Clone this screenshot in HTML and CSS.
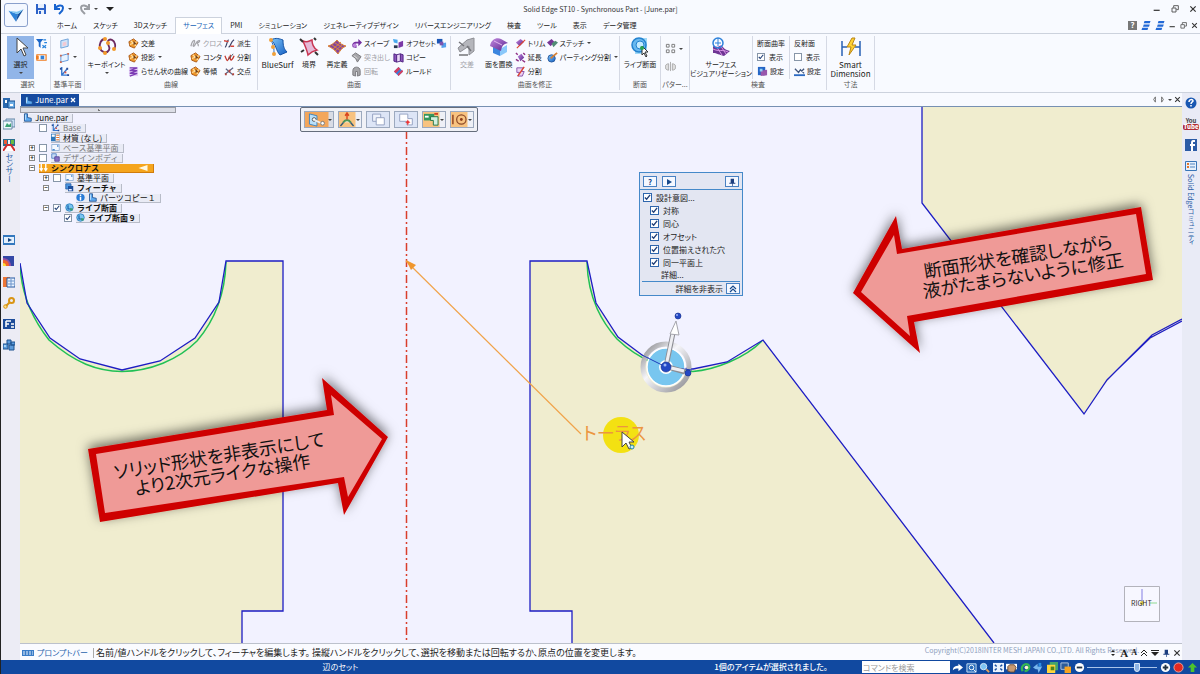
FILE: index.html
```html
<!DOCTYPE html>
<html lang="ja">
<head>
<meta charset="utf-8">
<meta name="viewport" content="width=device-width, initial-scale=1">
<title>Solid Edge ST10 - Synchronous Part - [June.par]</title>
<link rel="stylesheet" href="styles.css">
</head>
<body>
<svg class="defs" aria-hidden="true">
<defs>
<linearGradient id="gBlue" x2="1" y2="1"><stop offset="0" stop-color="#7cc4f8"/><stop offset="1" stop-color="#1660c4"/></linearGradient>
<linearGradient id="gPurple" x2="1" y2="1"><stop offset="0" stop-color="#c48ae0"/><stop offset="1" stop-color="#55208c"/></linearGradient>
<symbol id="i-save" viewBox="0 0 12 12"><path d="M1 1h9l1 1v9H1z" fill="#2d62c8"/><path d="M3 1h6v4H3zM3 7h6v4H3z" fill="#e8f0fc"/><path d="M4 8h2v3H4z" fill="#2d62c8"/></symbol>
<symbol id="i-undo" viewBox="0 0 12 12"><path d="M2 1v5h5M2 6c2-4 8-5 8-1 0 3-2 4-4 6" fill="none" stroke="#1763cf" stroke-width="2"/></symbol>
<symbol id="i-redo" viewBox="0 0 12 12"><path d="M10 1v5H5M10 6C8 2 2 1 2 5c0 3 2 4 4 6" fill="none" stroke="#9a9da3" stroke-width="2"/></symbol>
<symbol id="i-filter" viewBox="0 0 12 12"><path d="M0 1h8L5 5v6L3 9V5z" fill="#1a66c8"/><path d="M8 2h3M9 5h3M7 8l4 3M11 8l-4 3" stroke="#2583dd" stroke-width="1.3"/></symbol>
<symbol id="i-range" viewBox="0 0 12 12"><path d="M1 3h10v6H1z" fill="#fff" stroke="#ef7c20" stroke-width="1.3"/><path d="M0 4h3v4H0z" fill="#ef7c20"/><path d="M5 4h4v4H5z" fill="#3180d8"/></symbol>
<symbol id="i-plane" viewBox="0 0 12 12"><path d="M2 3l8-2v8l-8 2z" fill="#cfe4fa" stroke="#6a9fd8"/><path d="M4 5l4-1v4l-4 1z" fill="#f2c9d3"/></symbol>
<symbol id="i-plane2" viewBox="0 0 12 12"><path d="M2 4l8-2v7l-8 2z" fill="#e9f3ff" stroke="#5a93d8"/><path d="M1 3h2v2H1zM9 1h2v2H9zM1 10h2v2H1z" fill="#d06a50"/></symbol>
<symbol id="i-axes" viewBox="0 0 12 12"><path d="M3 1v9h7M3 10l6-7" fill="none" stroke="#3476d0" stroke-width="1.5"/><path d="M1 2h2v2H1zM8 2h2v2H8zM9 9h2v2H9z" fill="#284c98"/><path d="M6 6h2v2H6z" fill="#d54"/></symbol>
<symbol id="i-orange" viewBox="0 0 12 12"><path d="M1 4l5-3 5 4-4 6-5-2z" fill="#f19a2d" stroke="#a85410"/><path d="M2 7l8-3M3 3l6 6" stroke="#ffe0a0" stroke-width="1.2"/><path d="M6 3l3 3-3 2z" fill="#75431a"/></symbol>
<symbol id="i-helix" viewBox="0 0 12 12"><path d="M1 1h10v10H1z" fill="#e4d2f5"/><path d="M2 2h8L2 5h8L2 8h8l-8 3" fill="none" stroke="#7c3cb4" stroke-width="1.3"/></symbol>
<symbol id="i-cross-gray" viewBox="0 0 12 12"><path d="M1 9c1-5 3-7 4-6S2 9 4 9s2-5 5-6 1 2-1 2 2 1 1 4" fill="none" stroke="#a5a5aa" stroke-width="1.4"/></symbol>
<symbol id="i-derive" viewBox="0 0 12 12"><path d="M1 10c2 0 2-7 4-8M5 10c3-1 2-6 6-8" fill="none" stroke="#3c4266" stroke-width="1.3"/><path d="M0 3l5 1M7 9h4" stroke="#d2453b" stroke-width="1.5"/></symbol>
<symbol id="i-split" viewBox="0 0 12 12"><path d="M1 4c3 8 3 6 5 1M7 3c-1 9 2 6 4 1" fill="none" stroke="#c5392e" stroke-width="1.4"/><path d="M5 8l5-6" stroke="#456" /></symbol>
<symbol id="i-points" viewBox="0 0 12 12"><path d="M1 9l9-7M2 3l8 7" stroke="#5c6484" stroke-width="1.3"/><path d="M5 4h2v3H5zM1 8h2v2H1zM9 8h2v2H9z" fill="#b4453e"/></symbol>
<symbol id="i-sweep" viewBox="0 0 12 12"><path d="M2 10c-2-4 1-6 4-6h2V1l4 4-4 4V6H6C4 6 4 8 6 8v3z" fill="#74309f"/><circle cx="4" cy="8" r="2" fill="#bd83dd"/></symbol>
<symbol id="i-gray" viewBox="0 0 12 12"><path d="M1 4l4-3 6 4-4 6-2-4z" fill="#a6a6aa" stroke="#77777c"/><path d="M3 4l4 3" stroke="#ddd"/></symbol>
<symbol id="i-gray-turn" viewBox="0 0 12 12"><path d="M2 10V5c0-5 8-5 8 0v5l-3 1V6H5v5z" fill="#a6a6aa" stroke="#77777c"/></symbol>
<symbol id="i-offset" viewBox="0 0 12 12"><path d="M0 1l5 1v4L1 5z" fill="#49a9ee"/><path d="M6 5l5-2v6l-5 2z" fill="#7c3aa7"/><path d="M1 8h4v3H1z" fill="#29384f"/></symbol>
<symbol id="i-body" viewBox="0 0 12 12"><path d="M1 1h6v6H1z" fill="#c9def5" stroke="#3b71bd"/><path d="M5 5h6v6H5z" fill="#8770c4" stroke="#4b3c92"/></symbol>
<symbol id="i-copy" viewBox="0 0 12 12"><path d="M1 2l3 1v8l-3-1zM8 2l3 1v8l-3-1z" fill="#8d55bd" stroke="#4d2180"/><path d="M4 3l4-1v8l-4 1z" fill="#ead8f7" stroke="#4d2180"/></symbol>
<symbol id="i-ruled" viewBox="0 0 12 12"><path d="M1 6l5-5 5 5-5 5z" fill="#3a7fdc"/><path d="M1 6l5-5 2 2-5 5zM5 9l5-5 1 2-5 5z" fill="#d93e5d"/></symbol>
<symbol id="i-bluesq" viewBox="0 0 12 12"><path d="M1 1h6v5H1z" fill="#1b57b6"/><path d="M6 6l5-1v5l-5 1z" fill="#55a1ec"/><path d="M4 4h4v4H4z" fill="#7d54ae"/></symbol>
<symbol id="i-trim" viewBox="0 0 12 12"><path d="M1 5l5-4 4 3-5 5z" fill="url(#gPurple)"/><path d="M2 11L11 2" stroke="#e0442f" stroke-width="1.3"/></symbol>
<symbol id="i-extend" viewBox="0 0 12 12"><path d="M3 5l4-3 3 4-4 4z" fill="url(#gPurple)"/><path d="M1 1l2 2M8 9l3 2M1 8l3 2M9 1l2 2" stroke="#8f2f85" stroke-width="1.5"/></symbol>
<symbol id="i-cut" viewBox="0 0 12 12"><path d="M2 2h7L7 6h3l-2 5H3l2-4H2z" fill="#ecd2f2" stroke="#8650aa"/><path d="M3 11L10 1" stroke="#e0442f" stroke-width="1.5"/></symbol>
<symbol id="i-stitch" viewBox="0 0 12 12"><path d="M0 5l5-4 3 3-4 5z" fill="#753796"/><path d="M5 6l4-3 3 2-5 5z" fill="#508c75"/></symbol>
<symbol id="i-part" viewBox="0 0 12 12"><circle cx="5" cy="7" r="4" fill="url(#gBlue)" stroke="#28599d"/><path d="M4 7l7-6" stroke="#d78034" stroke-width="2"/></symbol>
<symbol id="i-pattern" viewBox="0 0 12 12"><g fill="none" stroke="#777"><path d="M1.500 1.500h3v3h-3zM7.500 1.500h3v3h-3zM1.500 7.500h3v3h-3zM7.500 7.500h3v3h-3z"/></g></symbol>
<symbol id="i-mirror" viewBox="0 0 12 12"><path d="M4 3c-5 0-5 7 0 7zM8 3c5 0 5 7 0 7z" fill="#ddd" stroke="#aaa"/><path d="M6 1v10" stroke="#aaa"/></symbol>
<symbol id="i-set1" viewBox="0 0 12 12"><path d="M1 1h8v9H1z" fill="#2566c6"/><path d="M4 5l7-1v6l-7 1z" fill="#9857ac"/><path d="M3 3h3v3H3z" fill="#8fd0f5"/></symbol>
<symbol id="i-set2" viewBox="0 0 12 12"><path d="M0 10h12" stroke="#2c6ac2" stroke-width="2"/><path d="M1 3l4 4 2-3 4 4M11 3L8 6" fill="none" stroke="#41567c" stroke-width="1.400"/></symbol>
<symbol id="i-part-file" viewBox="0 0 12 12"><path d="M2 1h4v5l5 1v4H2z" fill="#5da9ef" stroke="#154585"/><path d="M3 2h1v7H3z" fill="#d3ecff"/></symbol>
<symbol id="i-planes" viewBox="0 0 12 12"><path d="M1 2h10v8H1z" fill="#f4f9ff" stroke="#86a9d2"/><path d="M2 8h3v2H2zM8 3h2v2H8z" fill="#4a8bd0"/></symbol>
<symbol id="i-mat" viewBox="0 0 12 12"><path d="M0 1h6v10H0z" fill="#2b77bb"/><path d="M6 1h6v10H6z" fill="#fff" stroke="#68a"/><path d="M1 2h4v3H1z" fill="#fff"/><path d="M7 3h4M7 6h4M7 9h4" stroke="#e3722e" stroke-width="1.500"/></symbol>
<symbol id="i-feat" viewBox="0 0 12 12"><path d="M1 1h7v7H1z" fill="#4b94e0" stroke="#225aa0"/><path d="M4 4h7v7H4z" fill="#1d4f9c"/><path d="M5 8h4v2H5z" fill="#eef"/></symbol>
<symbol id="i-live" viewBox="0 0 12 12"><circle cx="6" cy="6" r="5" fill="#78c4f0" stroke="#1e74b8"/><path d="M4 3v5h4" stroke="#125aa8" stroke-width="1.500" fill="none"/><path d="M7 7h3v3H7z" fill="#3ba16a"/></symbol>
<symbol id="i-info" viewBox="0 0 12 12"><ellipse cx="6" cy="6" rx="5.500" ry="5" fill="#287bd7"/><path d="M5 2h2v2H5zM5 5h2v5H5z" fill="#fff"/></symbol>
<symbol id="i-panel" viewBox="0 0 12 12"><path d="M0 1h12v10H0z" fill="#3378bd"/><path d="M1 3h10v6H1z" fill="#e3f0fc"/><path d="M5 4l4 2-4 2z" fill="#16457e"/></symbol>
<symbol id="i-lib" viewBox="0 0 12 12"><path d="M0 1h7v10H0z" fill="#2b69ae"/><path d="M5 4h7v7H5z" fill="#6faee5" stroke="#174f91"/><path d="M2 3h2v3H2zM7 7h3v2H7z" fill="#fff"/></symbol>
<symbol id="i-pics" viewBox="0 0 12 12"><path d="M3 1h9v8H3z" fill="#c9dff3" stroke="#6787a6"/><path d="M0 3h9v8H0z" fill="#eff8fb" stroke="#6787a6"/><path d="M2 9l2-4 2 2 2-2v4z" fill="#3da274"/></symbol>
<symbol id="i-sensor" viewBox="0 0 12 12"><path d="M0 0h12v7H0z" fill="#2a6f8f"/><path d="M1 1h3v4H1z" fill="#ed5c38"/><path d="M5 1h2v4H5z" fill="#f4f4f4"/><path d="M8 1h3v4H8z" fill="#66bc43"/><path d="M0 12l4-6h4l4 6" fill="#fff" stroke="#d22d2d" stroke-width="2"/></symbol>
<symbol id="i-heat" viewBox="0 0 12 12"><path d="M0 1h11v10H0z" fill="#3347a5"/><path d="M0 3c5 0 8 4 8 8H0z" fill="#9750a3"/><path d="M0 5c4 0 6 2 6 6H0z" fill="#f0642e"/><path d="M0 8c2 0 3 1 3 3H0z" fill="#ffdb35"/></symbol>
<symbol id="i-table" viewBox="0 0 12 12"><path d="M0 1h7v10H0z" fill="#ed7636"/><path d="M4 2h8v9H4z" fill="#e9f3ff" stroke="#2458a0"/><path d="M5 5h6M5 8h6M8 3v8" stroke="#6d95cb"/></symbol>
<symbol id="i-key" viewBox="0 0 12 12"><circle cx="8.500" cy="3.500" r="2.500" fill="none" stroke="#d99514" stroke-width="2"/><circle cx="2.500" cy="9.500" r="1.800" fill="#ffe18b" stroke="#d99514"/><path d="M7 5L3 9" stroke="#d99514" stroke-width="2"/></symbol>
<symbol id="i-f" viewBox="0 0 12 12"><path d="M0 1h12v10H0z" fill="#1d4c9a"/><path d="M3 3h5M3 3v6M3 6h3M8 6h3M8 9h3" stroke="#fff" stroke-width="1.500"/></symbol>
<symbol id="i-cubes" viewBox="0 0 12 12"><path d="M4 1h4v4H4zM0 5h5v5H0zM6 6h5v5H6zM8 3h4v3H8z" fill="#5c9bdc" stroke="#1e528f"/><path d="M1 6h2v2H1z" fill="#a1d1f5"/></symbol>
<symbol id="i-dots" viewBox="0 0 12 12"><path d="M0 1h12v10H0z" fill="#eaf2fd"/><path d="M2 3l2 2M10 3L8 5M2 9l2-2M10 9L8 7" stroke="#174e9f" stroke-width="1.600"/></symbol>
<symbol id="i-win" viewBox="0 0 12 12"><path d="M1 2h10v9H1z" fill="#286ab9" stroke="#cfe6fa"/><circle cx="6" cy="6" r="2.500" fill="none" stroke="#fff"/><path d="M8 8l3 3" stroke="#fff"/></symbol>
<symbol id="i-zoom" viewBox="0 0 12 12"><circle cx="5" cy="5" r="3.500" fill="#7fc4f3" stroke="#dcecf9"/><path d="M8 8l3 3" stroke="#e6a45a" stroke-width="2"/></symbol>
<symbol id="i-hand" viewBox="0 0 12 12"><path d="M0 2h12v6H0z" fill="#fff"/><path d="M2 10V5l2-2h5l2 3-2 5H5z" fill="#c79a72" stroke="#684a34"/></symbol>
<symbol id="i-spin" viewBox="0 0 12 12"><path d="M3 10C0 5 5 1 9 3c3 3-1 7-4 7" fill="none" stroke="#35b651" stroke-width="2.500"/><circle cx="7" cy="6" r="2" fill="#fff6d0"/></symbol>
<symbol id="i-compass" viewBox="0 0 12 12"><path d="M0 6l5-4v3h5L6 12 5 8H3z" fill="#78b7ef"/><path d="M6 1h3v4H6z" fill="#2c8de5"/></symbol>
<symbol id="i-style" viewBox="0 0 12 12"><path d="M3 0h9v9H3z" fill="#42a46b"/><path d="M0 3h9v9H0z" fill="#ffd43b"/><path d="M4 5h4v4H4z" fill="#4c831d"/></symbol>
<symbol id="i-layer" viewBox="0 0 12 12"><path d="M1 1h8v7H1z" fill="#2d5c9a" stroke="#b7c9df"/><path d="M5 5h7v7H5z" fill="#f6a321"/></symbol>
<symbol id="i-win3" viewBox="0 0 12 12"><path d="M4 0h8l-1 3H3zM3 4.500h8l-1 3H2zM1 9h8l-1 3H0z" fill="#2269d6"/></symbol>
<symbol id="i-restore" viewBox="0 0 12 12"><path d="M4 4V1h7v6H8M1.500 4.500h6v6h-6z" fill="none" stroke="#555" stroke-width="1.400"/></symbol>
<symbol id="i-close" viewBox="0 0 12 12"><path d="M2 2l8 8M10 2l-8 8" stroke="#333" stroke-width="1.800"/></symbol>
<symbol id="i-min" viewBox="0 0 12 12"><path d="M1 8h9" stroke="#444" stroke-width="2"/></symbol>
<symbol id="i-pin" viewBox="0 0 12 12"><path d="M4 1h5v6h2v1.500H2V7h2zM6 8h1v4H6z" fill="#1d3f80"/></symbol>
</defs>
</svg>

<div class="app">
<header class="header">
  <button class="app-button" aria-label="アプリケーション"><svg viewBox="0 0 24 24"><path d="M3 7l11 4-2 9z" fill="#2d83d8"/><path d="M14 11l7-6-9 15z" fill="#15539f"/><path d="M3 7l11 4 7-6-8 3z" fill="#7ec6f2"/></svg></button>
  <div class="quick">
    <button aria-label="保存"><svg class="ic"><use href="#i-save"/></svg></button>
    <button aria-label="元に戻す" class="with-caret"><svg class="ic"><use href="#i-undo"/></svg><i class="caret"></i></button>
    <button aria-label="やり直し" class="with-caret"><svg class="ic"><use href="#i-redo"/></svg><i class="caret"></i></button>
    <button aria-label="カスタマイズ"><i class="caret big-caret"></i></button>
  </div>
  <h1 class="title">Solid Edge ST10 - Synchronous Part - [June.par]</h1>
  <div class="window-controls">
    <button aria-label="最小化"><svg><use href="#i-min"/></svg></button><button aria-label="元のサイズ"><svg><use href="#i-restore"/></svg></button><button aria-label="閉じる"><svg><use href="#i-close"/></svg></button>
  </div>
  <nav class="tabs">
    <a href="#home">ホーム</a><a href="#sketch">スケッチ</a><a href="#sketch3d">3Dスケッチ</a><a href="#surface" class="active">サーフェス</a><a href="#pmi">PMI</a><a href="#sim">シミュレーション</a><a href="#gen">ジェネレーティブデザイン</a><a href="#rev">リバースエンジニアリング</a><a href="#insp">検査</a><a href="#tools">ツール</a><a href="#view">表示</a><a href="#data">データ管理</a>
  </nav>
  <div class="doc-controls">
    <button class="help-box" aria-label="ヘルプ">?</button><button aria-label="ウィンドウ"><svg class="ic"><use href="#i-win3"/></svg></button><button aria-label="重ねて表示"><svg class="ic"><use href="#i-win3"/></svg></button><button aria-label="文書を最小化"><svg><use href="#i-min"/></svg></button><button aria-label="文書を元のサイズに"><svg><use href="#i-restore"/></svg></button><button aria-label="文書を閉じる"><svg><use href="#i-close"/></svg></button>
  </div>
</header>

<div class="ribbon">
  <section class="group g-select"><div class="group-body">
    <button class="big selected"><svg viewBox="0 0 20 20"><path d="M6 1v15l4-4 3 7 2-1-3-7h5z" fill="#fff" stroke="#444"/></svg><span>選択</span><i class="caret"></i></button>
    <div class="stack"><button class="tool" aria-label="フィルター"><svg class="ic"><use href="#i-filter"/></svg></button><button class="tool" aria-label="範囲"><svg class="ic"><use href="#i-range"/></svg></button></div>
  </div><h2>選択</h2></section>
  <section class="group g-plane"><div class="group-body">
    <div class="stack"><button class="tool" aria-label="平面"><svg class="ic"><use href="#i-plane"/></svg></button><button class="tool" aria-label="平行平面"><svg class="ic"><use href="#i-plane2"/></svg><i class="caret"></i></button><button class="tool" aria-label="座標系"><svg class="ic"><use href="#i-axes"/></svg></button></div>
  </div><h2>基準平面</h2></section>
  <section class="group g-curve"><div class="group-body">
    <button class="big"><svg viewBox="0 0 20 20"><path d="M8 2C4 2 2 7 3 11s7 6 9 2-3-6-1-9 6-1 7 3-1 5-2 5" fill="none" stroke="#6c2a60" stroke-width="1.800"/><g fill="#f39a2c"><circle cx="8" cy="2" r="2"/><circle cx="3" cy="11" r="2"/><circle cx="8" cy="16" r="2"/><circle cx="11" cy="6" r="2"/><circle cx="17" cy="12" r="2"/></g></svg><span>キーポイント</span><i class="caret"></i></button>
    <div class="stack"><button class="tool"><svg class="ic"><use href="#i-orange"/></svg>交差</button><button class="tool"><svg class="ic"><use href="#i-orange"/></svg>投影<i class="caret"></i></button><button class="tool"><svg class="ic"><use href="#i-helix"/></svg>らせん状の曲線</button></div>
    <div class="stack"><button class="tool" disabled><svg class="ic"><use href="#i-cross-gray"/></svg>クロス</button><button class="tool"><svg class="ic"><use href="#i-orange"/></svg>コンタ</button><button class="tool"><svg class="ic"><use href="#i-orange"/></svg>等傾</button></div>
    <div class="stack"><button class="tool"><svg class="ic"><use href="#i-derive"/></svg>派生</button><button class="tool"><svg class="ic"><use href="#i-split"/></svg>分割</button><button class="tool"><svg class="ic"><use href="#i-points"/></svg>交点</button></div>
  </div><h2>曲線</h2></section>
  <section class="group g-surface"><div class="group-body">
    <button class="big"><svg viewBox="0 0 20 20"><path d="M3 3c5-3 9-1 12 0 0 6 1 9 4 12l-7 3C8 14 8 7 3 3z" fill="url(#gBlue)" stroke="#1553a5"/><path d="M3 4c3 4 3 8 3 13" stroke="#286cc0" fill="none"/><g fill="#f0a13c"><circle cx="3" cy="3" r="2"/><circle cx="5" cy="10" r="2"/><circle cx="6" cy="17" r="2"/></g></svg><span class="latin">BlueSurf</span></button>
    <button class="big"><svg viewBox="0 0 20 20"><path d="M4 4c4 2 6 0 9-1 0 5 2 8 5 10-4 1-7 3-9 5-1-5-3-9-5-14z" fill="#e5b9d7" stroke="#c83552" stroke-width="1.500"/><path d="M1 2l3 3M15 1l2 2M16 15l3 3M2 15l3-2" stroke="#333" stroke-width="2"/></svg><span>境界</span></button>
    <button class="big"><svg viewBox="0 0 20 20"><path d="M1 9c4-1 6-3 9-6 2 3 5 5 9 6-4 2-6 4-8 8-3-4-6-6-10-8z" fill="#87459b" stroke="#dc8337"/><path d="M5 8l9 6M8 6l8 5M6 12l8-7M8 14l8-7" fill="none" stroke="#d9863f"/></svg><span>再定義</span></button>
    <div class="stack"><button class="tool"><svg class="ic"><use href="#i-sweep"/></svg>スイープ</button><button class="tool" disabled><svg class="ic"><use href="#i-gray"/></svg>突き出し</button><button class="tool" disabled><svg class="ic"><use href="#i-gray-turn"/></svg>回転</button></div>
    <div class="stack"><button class="tool"><svg class="ic"><use href="#i-offset"/></svg>オフセット</button><button class="tool"><svg class="ic"><use href="#i-copy"/></svg>コピー</button><button class="tool"><svg class="ic"><use href="#i-ruled"/></svg>ルールド</button></div>
    <div class="stack"><button class="tool" aria-label="中間曲面"><svg class="ic"><use href="#i-bluesq"/></svg></button></div>
  </div><h2>曲面</h2></section>
  <section class="group g-modify"><div class="group-body">
    <button class="big" disabled><svg viewBox="0 0 20 20"><path d="M10 3l7-2v13l-5 4V9l-9 6-2-4z" fill="#b5b6bc" stroke="#8d8e94"/><path d="M2 5l5 4M10 9l4 5M2 18h9" stroke="#74757a" stroke-width="1.500"/></svg><span>交差</span></button>
    <button class="big"><svg viewBox="0 0 20 20"><path d="M4 9l7 3v7l-7-3z" fill="#3c86df"/><path d="M11 12l7-4v7l-7 4z" fill="#8ac8fa"/><path d="M1 9c1-7 7-9 11-7l7 4c-5 1-6 3-7 8z" fill="url(#gPurple)"/><path d="M5 4l8 4" stroke="#e0b5ef"/></svg><span>面を置換</span></button>
    <div class="stack"><button class="tool"><svg class="ic"><use href="#i-trim"/></svg>トリム</button><button class="tool"><svg class="ic"><use href="#i-extend"/></svg>延長</button><button class="tool"><svg class="ic"><use href="#i-cut"/></svg>分割</button></div>
    <div class="stack"><button class="tool"><svg class="ic"><use href="#i-stitch"/></svg>ステッチ<i class="caret"></i></button><button class="tool"><svg class="ic"><use href="#i-part"/></svg>パーティング分割<i class="caret"></i></button></div>
  </div><h2>曲面を修正</h2></section>
  <section class="group g-section"><div class="group-body">
    <button class="big"><svg viewBox="0 0 20 20"><path d="M5 1h12v14l-3 2H5z" fill="#a0d8f6"/><circle cx="9" cy="8" r="7" fill="#68b8ef" stroke="#2382cf" stroke-width="1.500"/><circle cx="10" cy="8" r="4" fill="#c2eaff" stroke="#2382cf"/><path d="M12 9v9l2-2 2 4 1-1-2-4h3z" fill="#fff" stroke="#333"/><circle cx="12" cy="11" r="2" fill="#29a353"/></svg><span>ライブ断面</span></button>
  </div><h2>断面</h2></section>
  <section class="group g-pattern"><div class="group-body">
    <div class="stack two"><button class="tool" aria-label="パターン"><svg class="ic"><use href="#i-pattern"/></svg><i class="caret"></i></button><button class="tool" disabled aria-label="ミラー"><svg class="ic"><use href="#i-mirror"/></svg></button></div>
  </div><h2>パター...</h2></section>
  <section class="group g-inspect"><div class="group-body">
    <button class="big"><svg viewBox="0 0 20 20"><path d="M2 9c6 3 7-2 9 0s3 4 8 5l-6 5c-5-1-7-3-11-3z" fill="#6e3594"/><path d="M5 9l6 9M9 8l6 9M2 12c6 3 9 0 15 3" stroke="#d894e6" fill="none"/><ellipse cx="7" cy="6" rx="5" ry="5" fill="none" stroke="#2d82db" stroke-width="1.500"/><path d="M7 1v8M4 6h6" stroke="#2d82db"/></svg><span>サーフェス<br>ビジュアリゼーション</span></button>
    <div class="stack ruled"><span class="head">断面曲率</span><label class="tool"><input type="checkbox" checked>表示</label><button class="tool"><svg class="ic"><use href="#i-set1"/></svg>設定</button></div>
    <div class="stack ruled"><span class="head">反射面</span><label class="tool"><input type="checkbox">表示</label><button class="tool"><svg class="ic"><use href="#i-set2"/></svg>設定</button></div>
  </div><h2>検査</h2></section>
  <section class="group g-dim"><div class="group-body">
    <button class="big"><svg viewBox="0 0 20 20"><path d="M1 4v15M19 4v15M1 10h5M14 10h5" stroke="#2862b5" stroke-width="1.500"/><path d="M11 1L6 10h4l-2 8 7-10h-4l3-7z" fill="#ffd233" stroke="#b98516"/></svg><span class="latin">Smart<br>Dimension</span></button>
  </div><h2>寸法</h2></section>
</div>

<div class="workspace">
  <aside class="rail left">
    <button aria-label="ライブラリ"><svg><use href="#i-lib"/></svg></button><button aria-label="ファミリ"><svg><use href="#i-pics"/></svg></button><button aria-label="センサー"><svg><use href="#i-sensor"/></svg></button>
    <span class="vertical">センサー</span>
    <button aria-label="再生"><svg><use href="#i-panel"/></svg></button><button aria-label="シミュレーション"><svg><use href="#i-heat"/></svg></button><button aria-label="テーブル"><svg><use href="#i-table"/></svg></button><button aria-label="キー"><svg><use href="#i-key"/></svg></button><button aria-label="フィーチャライブラリ"><svg><use href="#i-f"/></svg></button><button aria-label="部品"><svg><use href="#i-cubes"/></svg></button>
  </aside>
  <main class="center">
    <div class="doc-tabs"><a href="#june" class="doc-tab"><svg class="ic"><use href="#i-part-file"/></svg>June.par<svg class="x" viewBox="0 0 6 6"><path d="M1 1l4 4M5 1L1 5" stroke="#fff" stroke-width="1.300"/></svg></a>
      <div class="doc-nav"><button aria-label="前へ"><svg viewBox="0 0 8 8"><path d="M5 1L3 4l2 3z" fill="none" stroke="#666"/></svg></button><button aria-label="次へ"><svg viewBox="0 0 8 8"><path d="M3 1l2 3-2 3z" fill="none" stroke="#666"/></svg></button><button aria-label="一覧"><i class="caret"></i></button><button aria-label="タブを閉じる"><svg viewBox="0 0 12 12"><use href="#i-close"/></svg></button></div></div>
    <div class="canvas">
      <svg class="drawing" viewBox="20 107 1162 536" preserveAspectRatio="xMinYMin slice">
        <defs>
          <filter id="shadow" x="-20%" y="-25%" width="140%" height="150%"><feDropShadow dx="0" dy="-3" stdDeviation="6" flood-color="#000" flood-opacity=".55"/></filter>
          <linearGradient id="ring" x2="1" y2="1"><stop offset="0" stop-color="#858589"/><stop offset=".4" stop-color="#f6f6fa"/><stop offset="1" stop-color="#8b8b90"/></linearGradient>
        </defs>
        <g fill="#f0edcf">
          <path d="M20 263l7 40 23 35 30 21 42 11 38-9 35-23 24-36 7-41h57v350h-41v32H20z"/>
          <path d="M530 261h57l9 42 22 34 24 18 25 12 26 2 34-7 36-22 231 303H572v-32h-42z"/>
          <path d="M922 107v96l162 211c24-38 56-74 98-93V107z"/>
        </g>
        <g fill="none" stroke="#20c055" stroke-width="1.500">
          <path d="M20 264C21 290 30 316 49 340C75 363 97 371 122 371.500C150 371 178 360 197 341C215 320 225 295 226 262"/>
          <path d="M587 262C588 300 603 323 617 339C638 359 665 371 693 371.500C715 370 745 358 762 341"/>
        </g>
        <g fill="none" stroke="#1d1dc4" stroke-width="1.300">
          <path d="M20 263l7 40 23 35 30 21 42 11 38-9 35-23 24-36 7-41h57v350h-41v32"/>
          <path d="M572 643v-32h-42V261h57l9 42 22 34 24 18 25 12 26 2 34-7 36-22 231 303"/>
          <path d="M922 107v96l162 211 23-34 10-10 33-32 32-17M1117 370l35-35 30-16"/>
        </g>
        <path d="M406.500 131v512" stroke="#d93f2c" stroke-width="1.500" stroke-dasharray="8 3 2 3"/>
        <path d="M406 261l175 173" stroke="#f0a34a" stroke-width="1.200"/><path d="M406 260l10 5-5 5z" fill="#f0972e"/>
        <circle cx="621" cy="435" r="18" fill="#f3e112"/>
        <text x="583" y="440" class="torus">トーラス</text>
        <path d="M622 432v15l4-4 3 6 3-1-3-6h5z" fill="#fff" stroke="#444"/><circle cx="632" cy="447" r="2" fill="#c7eef9" stroke="#2486a3"/>
        <circle cx="666" cy="367" r="19" fill="#78c6ef"/>
        <circle cx="666" cy="367" r="23" fill="none" stroke="url(#ring)" stroke-width="5"/>
        <circle cx="666" cy="367" r="19" fill="none" stroke="#fff" stroke-width="1.500"/>
        <circle cx="666" cy="367" r="7" fill="#fff"/>
        <path d="M642 355l24 12 26 3" fill="none" stroke="#1d3dbb"/>
        <path d="M666 367l7-34M668 367l17 5" stroke="#8c8d94" stroke-width="5"/><path d="M666 366l7-33M667 367l17 4" stroke="#eeeef2" stroke-width="3"/>
        <path d="M670 334l6-13 3 14z" fill="#fff" stroke="#a5a5ad"/>
        <g fill="#2448c4" stroke="#142b88" stroke-width=".6"><circle cx="678" cy="316" r="3"/><circle cx="666" cy="367" r="5"/><circle cx="688" cy="373" r="3"/></g><circle cx="665" cy="365" r="1.500" fill="#9db4f5"/><circle cx="677" cy="315" r="1" fill="#9db4f5"/>
        <g class="callout"><g filter="url(#shadow)"><path d="M88 449l239-39-5-32 66 59-44 78-6-32-238 39z" fill="#ce0000"/></g><path d="M96 454l238-39-3-20 51 44-34 58-4-20-239 36z" fill="#ef9a97"/>
          <text transform="translate(115 479) rotate(-9)">ソリッド形状を非表示にして</text><text transform="translate(136 495) rotate(-9)">より2次元ライクな操作</text></g>
        <g class="callout"><g filter="url(#shadow)"><path d="M853 293l43-77 6 33 239-42 12 73-239 42 6 31z" fill="#ce0000"/></g><path d="M861 292l33-57 3 19 239-40 10 60-239 42 3 20z" fill="#ef9a97"/>
          <text transform="translate(925 278) rotate(-9)">断面形状を確認しながら</text><text transform="translate(924 298) rotate(-9)">液がたまらないように修正</text></g>
        <path d="M1124.500 586.500h35v35h-35z" fill="#f7f7ff" stroke="#b3b3bb"/><path d="M1142 589v14" stroke="#aaa6ed" stroke-width="1.500"/><path d="M1150 603h7" stroke="#8fdb91"/><circle cx="1142" cy="603" r="2" fill="#d8cc4a"/><text x="1131" y="606" class="view-name">RIGHT</text>
      </svg>

      <div class="tree">
        <div class="splitter"></div>
        <ul>
          <li class="l0"><span class="tag"><svg><use href="#i-part-file"/></svg>June.par</span></li>
          <li class="l1"><input type="checkbox" aria-label="Base"><span class="tag dim"><svg><use href="#i-axes"/></svg>Base</span></li>
          <li class="l1"><b class="blank"></b><span class="tag"><svg><use href="#i-mat"/></svg>材質 (なし)</span></li>
          <li class="l1e"><button class="exp" aria-label="展開">+</button><input type="checkbox" aria-label="ベース基準平面"><span class="tag dim"><svg><use href="#i-planes"/></svg>ベース基準平面</span></li>
          <li class="l1e"><button class="exp" aria-label="展開">+</button><input type="checkbox" aria-label="デザインボディ"><span class="tag dim"><svg><use href="#i-body"/></svg>デザインボディ</span></li>
          <li class="l1e"><button class="exp" aria-label="折りたたむ">−</button><span class="tag sync"><svg viewBox="0 0 12 12"><path d="M3 1v8M9 1v8M1 7l2 3 2-3M7 7l2 3 2-3" stroke="#fff" stroke-width="1.800" fill="none"/></svg>シンクロナス<svg class="marker" viewBox="0 0 12 8"><path d="M0 4l12-4v8z" fill="#fff8e0"/></svg></span></li>
          <li class="l2"><button class="exp" aria-label="展開">+</button><input type="checkbox" aria-label="基準平面"><span class="tag"><svg><use href="#i-planes"/></svg>基準平面</span></li>
          <li class="l2"><button class="exp" aria-label="折りたたむ">−</button><b class="blank"></b><span class="tag bold"><svg><use href="#i-feat"/></svg>フィーチャ</span></li>
          <li class="l3"><span class="tag"><svg><use href="#i-info"/></svg><svg><use href="#i-part-file"/></svg>パーツコピー１</span></li>
          <li class="l2"><button class="exp" aria-label="折りたたむ">−</button><input type="checkbox" checked aria-label="ライブ断面"><span class="tag bold"><svg><use href="#i-live"/></svg>ライブ断面</span></li>
          <li class="l4"><input type="checkbox" checked aria-label="ライブ断面 9"><span class="tag bold"><svg><use href="#i-live"/></svg>ライブ断面 9</span></li>
        </ul>
      </div>

      <div class="command-bar">
        <button class="on wide" aria-label="フィーチャ"><svg viewBox="0 0 20 16"><path d="M3 2l8 2v11l-8-2z" fill="#b9e0fa" stroke="#3e83bd"/><circle cx="8" cy="8" r="2" fill="#fff" stroke="#555"/><path d="M9 9l7 3" stroke="#eee" stroke-width="2"/><circle cx="17" cy="12" r="2" fill="#fff" stroke="#777"/></svg><i class="caret"></i></button>
        <button class="on" aria-label="拘束"><svg viewBox="2 0 16 16"><path d="M3 15l5-6h4l5 6" fill="none" stroke="#335b77" stroke-width="1.500"/><path d="M6 11c2-3 6-3 8 0" fill="#fff" stroke="#4f9753" stroke-width="2"/><path d="M10 8V2M8 4l2-3 2 3" fill="none" stroke="#d9461e" stroke-width="1.500"/></svg><i class="caret"></i></button>
        <button aria-label="コピー"><svg viewBox="0 0 20 16"><path d="M4 2h9v8H4z" fill="#eef2fb" stroke="#8e9dbe"/><path d="M8 6h9v8H8z" fill="#fff" stroke="#8e9dbe"/></svg></button>
        <button aria-label="切り離し"><svg viewBox="0 0 20 16"><path d="M3 2h9v5h5v7h-6v-4H3z" fill="#fff" stroke="#8e9dbe"/><path d="M12 8l1 2 2 1-2 1-1 3-1-3-2-1 2-1z" fill="#ee3636"/></svg></button>
        <button class="on" aria-label="移動"><svg viewBox="1 0 17 16"><path d="M2 2h11v7H2z" fill="#35975e"/><path d="M9 5h8v9h-5V9H9z" fill="#d3f0df" stroke="#237443"/><path d="M3 4h4v2H3z" fill="#fff"/><path d="M13 2h4" stroke="#cf4022" stroke-width="2"/></svg><i class="caret"></i></button>
        <button class="on" aria-label="軸"><svg viewBox="1 0 17 16"><path d="M3 3v10" stroke="#8d3d1b" stroke-width="1.500"/><circle cx="12" cy="8" r="5" fill="none" stroke="#8d4a28" stroke-width="1.300"/><circle cx="12" cy="8" r="1.500" fill="#8d3d1b"/></svg><i class="caret"></i></button>
      </div>

      <form class="intent">
        <div class="intent-head"><button type="button" aria-label="ヘルプ">?</button><button type="button" aria-label="再生"><svg viewBox="0 0 8 8"><path d="M2 1l5 3-5 3z" fill="#174a8c"/></svg></button><button type="button" aria-label="ピン" class="end"><svg viewBox="0 0 12 12"><use href="#i-pin"/></svg></button></div>
        <label><input type="checkbox" checked>設計意図...</label>
        <label class="sub"><input type="checkbox" checked>対称</label>
        <label class="sub"><input type="checkbox" checked>同心</label>
        <label class="sub"><input type="checkbox" checked>オフセット</label>
        <label class="sub"><input type="checkbox" checked>位置揃えされた穴</label>
        <label class="sub"><input type="checkbox" checked>同一平面上</label>
        <a href="#detail" class="more">詳細...</a>
        <div class="intent-foot"><span>詳細を非表示</span><button type="button" aria-label="詳細を非表示"><svg viewBox="0 0 8 8"><path d="M1 4l3-3 3 3M1 7l3-3 3 3" fill="none" stroke="#174a8c" stroke-width="1.200"/></svg></button></div>
      </form>
    </div>
    <div class="prompt">
      <span class="prompt-name"><svg viewBox="0 0 12 8"><path d="M0 1h12v6H0z" fill="#3a7cc7"/><path d="M1 3h10M1 5h10" stroke="#e8f2fd" stroke-dasharray="2 1"/></svg>プロンプトバー</span>
      <output class="prompt-text">名前/値ハンドルをクリックして、フィーチャを編集します。 操縦ハンドルをクリックして、選択を移動または回転するか、原点の位置を変更します。</output>
      <span class="copyright">Copyright(C)2018INTER MESH JAPAN CO.,LTD. All Rights Reserved.</span>
      <div class="prompt-tools"><button aria-label="行数"><svg viewBox="0 0 8 8"><path d="M2 3l2-2 2 2zM2 5l2 2 2-2z" fill="#222"/></svg></button><button class="font-up" aria-label="文字を拡大">A</button><button class="font-down" aria-label="文字を縮小">A</button><button aria-label="上へ"><svg viewBox="0 0 8 8"><path d="M1 4l3-3 3 3M1 7l3-3 3 3" fill="none" stroke="#222"/></svg></button><button aria-label="下へ"><svg viewBox="0 0 8 8"><path d="M0 1h8v1H0zM0 3h8L4 7z" fill="#222"/></svg></button><button aria-label="固定"><svg viewBox="0 0 12 12"><use href="#i-pin"/></svg></button><button aria-label="閉じる"><svg viewBox="0 0 12 12"><use href="#i-close"/></svg></button></div>
    </div>
  </main>
  <aside class="rail right">
    <button aria-label="ヘルプ"><svg viewBox="0 0 12 12"><circle cx="6" cy="6" r="5.500" fill="#1857b2"/><path d="M4 5c0-3 4-3 4-1 0 1-2 1-2 3M6 8v1.500" stroke="#fff" stroke-width="1.500" fill="none"/></svg></button>
    <button class="yt" aria-label="YouTube"><span>You</span><b>Tube</b></button>
    <button aria-label="Facebook"><svg viewBox="0 0 12 12"><path d="M0 0h12v12H0z" fill="#2b5ba5"/><path d="M10 2H8Q7 2 7 4v8M5 6h5" stroke="#fff" stroke-width="2" fill="none"/></svg></button>
    <button aria-label="コミュニティ"><svg viewBox="0 0 12 12"><path d="M.5 1.500h11v9H.5z" fill="#e6f0fb" stroke="#3976b8"/><path d="M2 4h2M2 7h2" stroke="#e2762b" stroke-width="2"/><path d="M5 4h5M5 7h5" stroke="#4e83c1"/></svg></button>
    <span class="vertical">Solid Edgeコミュニティ</span>
  </aside>
</div>

<footer class="status">
  <span>辺のセット</span><span class="strong">1個のアイテムが選択されました。</span>
  <input type="search" placeholder="コマンドを検索" aria-label="コマンドを検索">
  <div class="status-tools">
    <button aria-label="実行"><svg viewBox="0 0 12 12"><path d="M1 9c0-4 3-5 6-5V2l5 4-5 4V7C4 7 3 7 1 9z" fill="#fff"/></svg></button>
    <button aria-label="領域ズーム"><svg><use href="#i-win"/></svg></button><button aria-label="ズーム"><svg><use href="#i-zoom"/></svg></button><button aria-label="全体表示"><svg><use href="#i-dots"/></svg></button><button aria-label="画面移動"><svg><use href="#i-hand"/></svg></button><button aria-label="回転"><svg><use href="#i-spin"/></svg></button><button aria-label="ビュー方向"><svg><use href="#i-compass"/></svg></button><button aria-label="スタイル"><svg><use href="#i-style"/></svg></button><button aria-label="レイヤ"><svg><use href="#i-layer"/></svg></button>
    <button aria-label="縮小"><svg viewBox="0 0 12 12"><circle cx="6" cy="6" r="5" fill="#fff"/><path d="M3 6h6" stroke="#234" stroke-width="2"/></svg></button>
    <input type="range" min="0" max="100" value="73" aria-label="表示倍率">
    <button aria-label="拡大"><svg viewBox="0 0 12 12"><circle cx="6" cy="6" r="5" fill="#fff"/><path d="M3 6h6M6 3v6" stroke="#234" stroke-width="2"/></svg></button>
    <button aria-label="録画"><svg viewBox="0 0 12 12"><circle cx="6" cy="6" r="5" fill="#e32922" stroke="#f3aaa0"/></svg></button>
    <button aria-label="アップロード"><svg viewBox="0 0 12 12"><path d="M6 1l5 5H8v5H4V6H1z" fill="#4dc42c"/></svg></button>
  </div>
</footer>
</div>
</body>
</html>
```
FILE: styles.css
```css
* { box-sizing: border-box; }
html, body { height: 100%; }
body {
  margin: 0;
  font-family: "Noto Sans CJK JP", sans-serif;
  font-size: 8px;
  line-height: 10px;
  color: #333;
  font-feature-settings: "palt";
  background: #f8faff;
}
button, input {
  font: inherit;
  font-feature-settings: inherit;
  color: inherit;
  margin: 0;
  padding: 0;
  border: 0;
  background: none;
}
button { display: flex; align-items: center; justify-content: center; white-space: nowrap; }
a { color: inherit; text-decoration: none; }
svg { display: block; width: 12px; height: 12px; flex: none; }
h1, h2, ul { margin: 0; padding: 0; font-size: inherit; font-weight: 400; list-style: none; }
.defs { position: absolute; width: 0; height: 0; }
.app { display: flex; flex-direction: column; min-height: 100vh; border-left: 1px solid #222; }

.caret { flex: none; border: 2px solid transparent; border-top: 2px solid #444; border-bottom: 0; margin: 0 1px; }
.big-caret { border-width: 4px; border-top: 4px solid #222; border-bottom: 0; }

input[type="checkbox"] {
  appearance: none;
  flex: none;
  width: 8px;
  height: 8px;
  border: 1px solid #8796a8;
  background: #fff;
}
input[type="checkbox"]:checked {
  background: #fff url("data:image/svg+xml,%3Csvg xmlns='http://www.w3.org/2000/svg' viewBox='0 0 8 8'%3E%3Cpath d='M1 4l2 2 4-5' fill='none' stroke='%23203f78' stroke-width='1.500'/%3E%3C/svg%3E") center / 100%;
}

/* Header */
.header {
  display: grid;
  grid-template-columns: 32px 1fr auto 1fr 32px;
  grid-template-rows: 17px 16px;
  border-bottom: 1px solid #ccd2dd;
}
.app-button { grid-row: 1 / 3; width: 24px; height: 24px; margin: 3px; border: 1px solid #8aa0cc; border-radius: 3px; background: #f4f8ff; }
.app-button svg { width: 20px; height: 20px; }
.quick { display: flex; align-items: center; gap: 6px; padding-left: 2px; }
.quick .with-caret { gap: 2px; }
.title { align-self: center; font-size: 7px; color: #333; }
.window-controls { grid-column: 4 / 6; display: flex; justify-content: flex-end; align-items: center; gap: 10px; padding-right: 3px; }
.window-controls svg { width: 8px; height: 8px; }
.tabs { grid-column: 2 / 4; display: flex; padding-left: 16px; }
.tabs a { padding: 3px 8px 0; white-space: nowrap; font-size: 7px; color: #222; }
.tabs .active { border: 1px solid #ccd2dd; border-bottom: 0; background: #fff; margin-bottom: -1px; padding: 2px 7px 0; color: #1763b8; }
.doc-controls { grid-column: 4 / 6; display: flex; justify-content: flex-end; align-items: center; gap: 4px; padding-right: 2px; }
.doc-controls svg { width: 7px; height: 7px; }
.doc-controls svg.ic { width: 10px; height: 9px; }
.help-box { width: 9px; height: 9px; background: #777; color: #fff; font-weight: 700; }

/* Ribbon */
.ribbon { display: flex; padding: 2px 0 2px 4px; border-bottom: 1px solid #ccd2dd; font-size: 7px; color: #222; }
.group { display: flex; flex-direction: column; flex: none; border-right: 1px solid #d5d9e4; }
.group-body { display: flex; height: 43px; }
.group h2 { text-align: center; color: #555; white-space: nowrap; line-height: 11px; }
.g-select { width: 46px; }
.g-plane { width: 34px; }
.g-plane .group-body { padding-left: 8px; }
.g-curve { width: 173px; }
.g-surface { width: 193px; }
.g-modify { width: 169px; }
.g-section { width: 41px; }
.g-pattern { width: 29px; }
.g-inspect { width: 137px; }
.g-dim { width: 48px; }
.big { flex-direction: column; justify-content: flex-start; padding-top: 1px; text-align: center; line-height: 9px; }
.big svg { width: 20px; height: 20px; margin-bottom: 3px; }
.big .caret { margin-top: 3px; }
.big:disabled, .tool:disabled { color: #a0a0a6; }
.latin { font-size: 8px; }
.selected { width: 27px; background: #91b5e8; margin-left: 2px; }
.stack { display: grid; grid-auto-rows: 14px; align-content: start; justify-items: start; align-items: center; }
.stack.two { align-content: center; grid-auto-rows: 18px; padding-left: 4px; }
.tool { display: flex; align-items: center; justify-content: flex-start; gap: 2px; white-space: nowrap; }
.tool .ic { width: 11px; height: 11px; }
.g-select .stack { padding-left: 2px; }
.g-curve .big { width: 43px; }
.g-curve .stack:nth-child(2) { width: 62px; }
.g-curve .stack:nth-child(3) { width: 34px; }
.g-surface .big { width: 28px; }
.g-surface .big:first-child { width: 37px; padding-left: 2px; }
.g-surface .stack:nth-child(4) { width: 42px; }
.g-surface .stack:nth-child(5) { width: 43px; }
.g-modify .big { width: 32px; }
.g-modify .stack:nth-child(3) { width: 32px; }
.g-section .big, .g-dim .big { width: 100%; }
.g-inspect .big { width: 62px; }
.ruled { border-left: 1px solid #d5d9e4; padding-left: 4px; width: 39px; }
.ruled label { gap: 4px; }

/* Workspace */
.workspace { display: flex; flex: 1; min-height: 0; }
.rail { width: 18px; flex: none; display: flex; flex-direction: column; align-items: center; gap: 9px; padding-top: 4px; background: #e9ebf6; }
.rail.left { width: 19px; padding-right: 3px; background: #ececf5; }
.vertical { writing-mode: vertical-rl; color: #2a5da5; line-height: 10px; white-space: nowrap; font-feature-settings: "vpal"; }
.rail.left .vertical { height: 72px; margin-top: -7px; }
.rail.right .vertical { margin-top: -7px; font-size: 7px; }
.yt { flex-direction: column; font-size: 6px; line-height: 6px; height: 12px; font-weight: 700; color: #444; }
.yt b { background: #b02d36; color: #fff; border-radius: 2px; }
.center { flex: 1; min-width: 0; display: flex; flex-direction: column; }
.doc-tabs { display: flex; justify-content: space-between; align-items: flex-end; height: 14px; border-bottom: 1px solid #7690b2; }
.doc-tab { display: flex; align-items: center; gap: 2px; height: 12px; padding: 0 3px; margin-left: 1px; background: #164ba0; color: #fff; }
.doc-tab .ic { width: 9px; height: 9px; }
.doc-tab .x { width: 6px; height: 6px; }
.doc-nav { display: flex; align-items: center; gap: 1px; height: 13px; padding-right: 1px; }
.doc-nav svg { width: 7px; height: 7px; }
.canvas { position: relative; flex: 1; overflow: hidden; background: #f2f2ff; }
.drawing { position: absolute; inset: 0; width: 100%; height: 100%; }
.callout text { font-size: 18px; fill: #111; }
.torus { font-size: 18px; fill: #ec9640; }
.view-name { font-size: 7px; fill: #333; }

/* Model tree */
.tree { position: relative; width: 156px; font-feature-settings: normal; color: #111; }
.splitter { height: 6px; border: 1px solid #9a9ca4; background: radial-gradient(circle, #777 0 1px, transparent 1px) center / 3px 3px no-repeat, #dcdee6; }
.tree li { display: flex; align-items: center; height: 10px; gap: 4px; line-height: 9px; white-space: nowrap; }
.tree svg { width: 9px; height: 9px; }
.tag { display: flex; align-items: center; gap: 3px; height: 9px; padding-right: 4px; border: solid #b8bcc8; border-width: 0 1px 1px 0; background: #e9ebf5; }
.dim { color: #777; }
.bold { font-weight: 700; }
.sync { flex: 1; background: #f5a51d; border-color: #d07c0c; font-weight: 700; margin-right: 22px; }
.sync .marker { width: 12px; height: 6px; margin-left: auto; }
.exp { width: 6px; height: 6px; border: 1px solid #888; background: #fff; font-size: 6px; line-height: 4px; font-weight: 700; }
.blank { width: 8px; }
.l0 { padding-left: 3px; }
.l1 { padding-left: 19px; }
.l1e { padding-left: 9px; }
.l2 { padding-left: 23px; }
.l3 { padding-left: 56px; }
.l4 { padding-left: 44px; }

/* Floating command bar */
.command-bar { position: absolute; top: 0; left: 280px; display: flex; gap: 4px; padding: 3px; border: 1px solid #656d7c; border-radius: 2px; background: #f0f1f6; }
.command-bar button { width: 24px; height: 17px; border: 1px solid #9ca9be; background: #dde5f6; }
.command-bar button.on { background: linear-gradient(90deg, #f8c380 16px, #eef0f6 17px); }
.command-bar button.wide { width: 30px; background: linear-gradient(90deg, #f3a75c 23px, #d9dce5 24px); }
.command-bar svg { width: 18px; height: 15px; }
.command-bar .on svg { width: 16px; }
.command-bar .wide svg { width: 22px; }

/* Design intent panel */
.intent { position: absolute; left: 619px; top: 65px; width: 104px; border: 1px solid #4589c9; background: #e3e6f2; color: #222; }
.intent-head { display: flex; gap: 5px; padding: 3px; height: 17px; border-bottom: 1px solid #4589c9; margin-bottom: 1px; }
.intent button { width: 14px; height: 11px; border: 1px solid #4981c2; background: #f5f8ff; color: #174a8c; font-weight: 700; }
.intent button svg { width: 8px; height: 8px; }
.intent .end { margin-left: auto; }
.intent label { display: flex; align-items: center; height: 13px; gap: 4px; padding-left: 3px; }
.intent .sub { padding-left: 10px; }
.intent input[type="checkbox"] { width: 9px; height: 9px; border-color: #2f66ad; }
.more { display: block; padding-left: 21px; height: 12px; line-height: 11px; }
.intent-foot { display: flex; justify-content: flex-end; align-items: center; gap: 3px; margin: 0 2px; height: 14px; border-top: 1px solid #4589c9; }

/* Prompt bar */
.prompt { display: flex; align-items: center; height: 17px; padding-top: 2px; border-top: 1px solid #bcc1cc; background: #fafbff; white-space: nowrap; }
.prompt-name { display: flex; align-items: center; gap: 3px; width: 73px; padding-left: 2px; color: #2963ac; }
.prompt-name svg { height: 8px; }
.prompt-text { flex: 1; color: #222; border-left: 1px solid #aaa; padding-left: 2px; font-size: 9px; }
.copyright { color: #8f9fbd; align-self: flex-start; line-height: 8px; font-size: 7px; margin-right: -30px; }
.prompt-tools { display: flex; align-items: center; gap: 3px; padding-right: 1px; }
.prompt-tools button { color: #222; }
.prompt-tools svg { width: 8px; height: 8px; }
.prompt-tools .font-up { font-family: "Liberation Serif", serif; font-weight: 700; font-size: 11px; }
.prompt-tools .font-down { font-family: "Liberation Serif", serif; font-weight: 700; font-size: 8px; }

/* Status bar */
.status { display: grid; grid-template-columns: minmax(0, 1fr) 182px 88px 250px; align-items: center; height: 14px; background: #1149a0; color: #fff; text-align: center; white-space: nowrap; }
.strong { font-weight: 500; }
.status input[type="search"] { width: 100%; height: 12px; background: #fff; color: #333; padding-left: 1px; }
.status input::placeholder { color: #999; }
.status-tools { display: flex; align-items: center; justify-content: space-between; padding: 0 2px; }
.status-tools svg { width: 11px; height: 11px; }
.status input[type="range"] { appearance: none; width: 70px; height: 12px; background: linear-gradient(#a8c4ea, #a8c4ea) center / 100% 1px no-repeat; }
.status input[type="range"]::-webkit-slider-thumb { appearance: none; width: 6px; height: 9px; background: #8eb5e5; border: 1px solid #dceafa; border-radius: 0 0 3px 3px; }
```
